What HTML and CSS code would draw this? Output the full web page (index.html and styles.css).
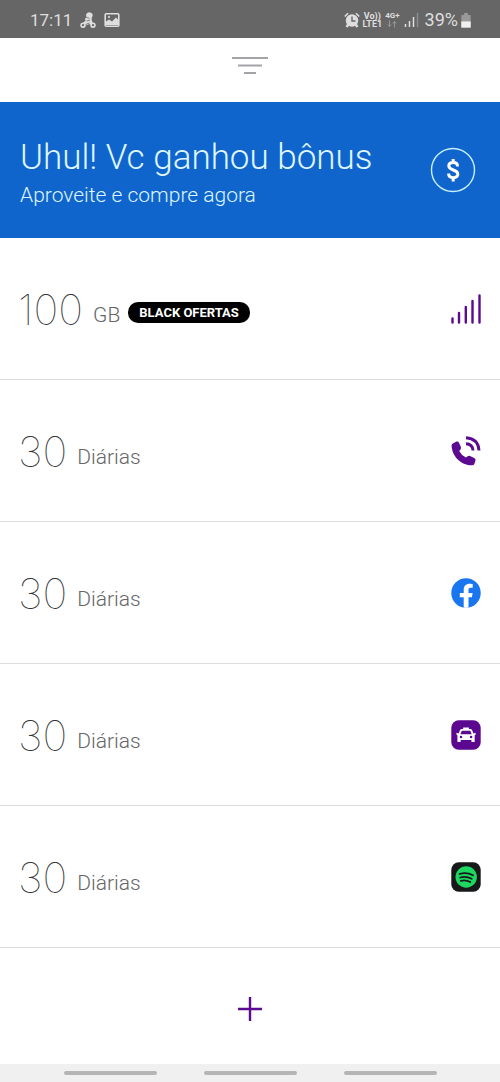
FILE: index.html
```html
<!DOCTYPE html>
<html lang="pt-BR">
<head>
<meta charset="utf-8">
<meta name="viewport" content="width=device-width, initial-scale=1">
<title>Bônus</title>
<link rel="stylesheet" href="styles.css">
</head>
<body>
<div class="screen">
  <header class="status">
    <div class="status-group status-left">
      <span class="clock">17:11</span>
      <svg class="icon16" viewBox="0 0 16 16" aria-hidden="true"><path d="M6 2.500Q8-.8 11 .8 13.500 2 12.300 4.500L11.500 7l1 3.500 2.500 2-2 2-3.500-2.500-5 2-3-1.500L4 10l1.500-1.500L5 6.500l1.500-1z" fill="#dedede"/><g fill="#666" stroke="#dedede" stroke-width="1.600"><circle cx="3" cy="13.200" r="1.900"/><circle cx="13" cy="13.200" r="1.900"/></g><path d="M6.500 5.500l3 .8M6.500 9l3.500-.8M5.500 12.500l4-1.500" stroke="#666" stroke-width=".8" fill="none"/></svg>
      <svg class="icon16" viewBox="0 0 16 16" aria-hidden="true"><rect x="1.200" y="1.800" width="13.600" height="12.400" rx="1" fill="none" stroke="#dedede" stroke-width="1.600"/><path d="M2 13V9.500l3-2 3 2 4-4 2 2V13z" fill="#dedede"/><circle cx="5" cy="5" r="1.100" fill="#dedede"/></svg>
    </div>
    <div class="status-group">
      <svg class="icon16" viewBox="0 0 16 16" aria-hidden="true"><circle cx="8" cy="8.500" r="6.200" fill="#dedede"/><path d="M.8 4.500L4 1.300M15.200 4.500L12 1.300" stroke="#dedede" stroke-width="1.600"/><path d="M2.500 15l2-3M13.500 15l-2-3" stroke="#dedede" stroke-width="2.400"/><path d="M8 4.500V9h3.500" fill="none" stroke="#666" stroke-width="1.400"/></svg>
      <span class="net"><span>Vo))</span><span>LTE1</span></span>
      <span class="net"><span class="gen">4G+</span><svg class="arrows" viewBox="0 0 10 7" aria-hidden="true"><path d="M2.500 0v6M.8 4l1.700 2 1.700-2M7.500 7V1M5.800 3l1.700-2 1.700 2" fill="none" stroke="#999" stroke-width="1"/></svg></span>
      <svg class="icon16" viewBox="0 0 16 16" aria-hidden="true"><path d="M2.500 12v3M6.500 9v6M10.500 5v10" stroke="#dedede" stroke-width="1.500"/><path d="M14.500 1v14" stroke="#8c8c8c" stroke-width="1.500"/></svg>
      <span class="battery-text">39%</span>
      <svg class="battery" viewBox="0 0 10 16" aria-hidden="true"><path d="M3 0h4v2h3v14H0V2h3z" fill="#999"/><path d="M0 9h10v6.500H0z" fill="#f0f0f0"/></svg>
    </div>
  </header>

  <button class="handle" type="button" aria-label="Filtro">
    <svg class="filter" viewBox="0 0 36 17" aria-hidden="true"><path d="M0 1h36M6 8.500h24M12 16h12" stroke="#a5a3a8" stroke-width="2"/></svg>
  </button>

  <a class="banner" href="#comprar">
    <span class="banner-copy">
      <strong class="banner-title">Uhul! Vc ganhou bônus</strong>
      <span class="banner-sub">Aproveite e compre agora</span>
    </span>
    <svg class="coin" viewBox="0 0 46 46" aria-hidden="true"><circle cx="23" cy="23" r="21.500" fill="none" stroke="#c8efff" stroke-width="1.400"/><path d="M27.500 19.500c0-2.500-1.700-3.900-4.300-3.900-2.600 0-4.400 1.300-4.400 3.500 0 4.700 9 3.100 9 8 0 2.300-1.800 3.600-4.500 3.600s-4.700-1.400-4.700-4.100M23.200 12v3.500M23.200 31v3.500" fill="none" stroke="#fff" stroke-width="3"/></svg>
  </a>

  <ul class="benefits">
    <li class="row">
      <span class="amount">100</span><span class="unit">GB</span><span class="tag">BLACK OFERTAS</span>
      <svg class="icon" viewBox="0 0 30 30" aria-hidden="true"><path d="M1.500 24.500v4M8 19v9.500M14.800 13v15.500M21.500 7v21.500M28.500 1.500v27" stroke="#5b0a91" stroke-width="2.400" stroke-linecap="round"/></svg>
    </li>
    <li class="row">
      <span class="amount">30</span><span class="unit">Diárias</span>
      <svg class="icon" viewBox="0 0 30 30" aria-hidden="true"><path d="M1.800 7.500L5.500 5.600Q7.400 5.200 8.100 7L9.900 11Q10.400 12.400 9.500 13.400L8.200 15Q10.400 19.300 14.900 21.500L16.700 20.200Q17.800 19.400 19 19.900L23.200 21.900Q24.900 22.700 24.500 24.500L23.400 27.700Q22.900 29.200 21.200 29.300C9.500 29.400.9 20 .6 9.500Q.6 8 1.800 7.500Z" fill="#5b0a91"/><path d="M15 7.800Q21.500 8 22 14.500M15 1.800Q27.300 2.800 28 14.500" fill="none" stroke="#5b0a91" stroke-width="2.900"/></svg>
    </li>
    <li class="row">
      <span class="amount">30</span><span class="unit">Diárias</span>
      <svg class="icon" viewBox="0 0 30 30" aria-hidden="true"><circle cx="15" cy="15" r="14.700" fill="#1976ee"/><path d="M12.700 29.600V19.300H8.800V15h3.900v-3.200c0-3.900 2.300-6.100 5.900-6.100 1.700 0 3.100.3 3.100.3v3.700h-2c-1.900 0-2.200 1.100-2.200 2.300v3h4.100l-.7 4.300h-3.400v10.300a15 15 0 0 1-4.800 0z" fill="#fff"/></svg>
    </li>
    <li class="row">
      <span class="amount">30</span><span class="unit">Diárias</span>
      <svg class="icon" viewBox="0 0 30 30" aria-hidden="true"><rect x=".3" y=".3" width="29.400" height="29.400" rx="7.500" fill="#5c078f"/><path transform="translate(-2.200 -2.200) scale(1.150)" fill="#fff" fill-rule="evenodd" d="M12.500 8.500h5v1.200h1.200q1.200 0 1.600 1.200l1.200 2.700 1.800-.6v1.800l-.8.400v5.800h-2.800v-1.800h-9.400V21H7.500v-5.800l-.8-.4V13l1.800.6 1.200-2.700q.4-1.200 1.600-1.200h1.200zm-1.200 2.700-1.200 3h9.800l-1.200-3zM10.600 15.600a1.100 1.100 0 1 0 0 2.200 1.100 1.100 0 0 0 0-2.200zm8.800 0a1.100 1.100 0 1 0 0 2.200 1.100 1.100 0 0 0 0-2.200z"/></svg>
    </li>
    <li class="row">
      <span class="amount">30</span><span class="unit">Diárias</span>
      <svg class="icon" viewBox="0 0 30 30" aria-hidden="true"><rect x=".3" y=".3" width="29.400" height="29.400" rx="7.500" fill="#17181a"/><circle cx="15.200" cy="15" r="10.700" fill="#1ed760"/><path d="M8.500 12q7-2.200 13.500 1.300M9.200 15.500q5.800-1.700 11.500 1.300M9.800 18.800q5-1.300 9.500 1.200" fill="none" stroke="#17181a" stroke-width="1.800" stroke-linecap="round"/></svg>
    </li>
  </ul>

  <button class="add" type="button" aria-label="Adicionar">
    <svg class="plus" viewBox="0 0 26 26" aria-hidden="true"><path d="M13 1v24M1 13h24" stroke="#5b0a91" stroke-width="2.400"/></svg>
  </button>

  <nav class="gestures" aria-label="Navegação">
    <span class="pill"></span><span class="pill"></span><span class="pill"></span>
  </nav>
</div>
</body>
</html>
```
FILE: styles.css
```css
* { box-sizing: border-box; }
body { margin: 0; background: #fff; font-family: Roboto, sans-serif; }
.screen { display: flex; flex-direction: column; min-height: 100vh; }

.status {
  display: flex; align-items: center; justify-content: space-between;
  height: 38px; padding: 2px 29px 0 30px; background: #666; color: #dedede;
}
.status-group { display: flex; align-items: center; gap: 3px; }
.status-left { gap: 8px; }
.clock, .battery-text { font-size: 18px; line-height: 20px; }
.clock { font-size: 17px; }
.battery-text { margin-left: 3px; }
.icon16 { width: 16px; height: 16px; }
.battery { width: 10px; height: 15px; }
.net { display: flex; flex-direction: column; align-items: center; font-size: 9px; font-weight: 700; line-height: 8px; }
.gen { font-size: 8px; }
.arrows { width: 10px; height: 8px; }

.handle {
  display: flex; justify-content: center; padding: 19px 0 28px;
  border: 0; background: none;
}
.filter { width: 36px; height: 17px; }

.banner {
  display: flex; align-items: center; justify-content: space-between;
  min-height: 136px; padding: 0 24px 0 20px;
  background: #1065cd; color: #dff6ff; text-decoration: none; font-weight: 300;
}
.banner-copy { display: flex; flex-direction: column; padding-top: 6px; }
.banner-title { font-size: 35px; line-height: 44px; font-weight: 300; }
.banner-sub { font-size: 21px; line-height: 30px; }
.coin { width: 46px; height: 46px; }

.benefits { margin: 0; padding: 0; list-style: none; }
.row {
  display: flex; align-items: center; min-height: 142px; padding: 0 19px 0 18px;
  border-bottom: 1px solid #dcdcdc;
}
.amount { margin-top: 2px; font-family: Inter, sans-serif; font-size: 42px; line-height: 50px; font-weight: 100; color: #333; }
.unit { margin: 12px 0 0 10px; font-size: 21px; line-height: 26px; font-weight: 300; color: #666; }
.tag {
  margin: 8px 0 0 8px; padding: 0 11px; border-radius: 10px;
  background: #000; color: #fff; font-size: 13px; line-height: 21px; font-weight: 700;
}
.icon { width: 30px; height: 30px; margin-left: auto; }

.add {
  display: flex; flex: 1; align-items: center; justify-content: center;
  padding: 40px 0 34px; border: 0; background: none;
}
.plus { width: 26px; height: 26px; }

.gestures {
  display: flex; align-items: center; justify-content: center; gap: 47px;
  height: 18px; background: #f0f0f0;
}
.pill { width: 93px; height: 4px; border-radius: 2px; background: #b5b5b5; }
```
